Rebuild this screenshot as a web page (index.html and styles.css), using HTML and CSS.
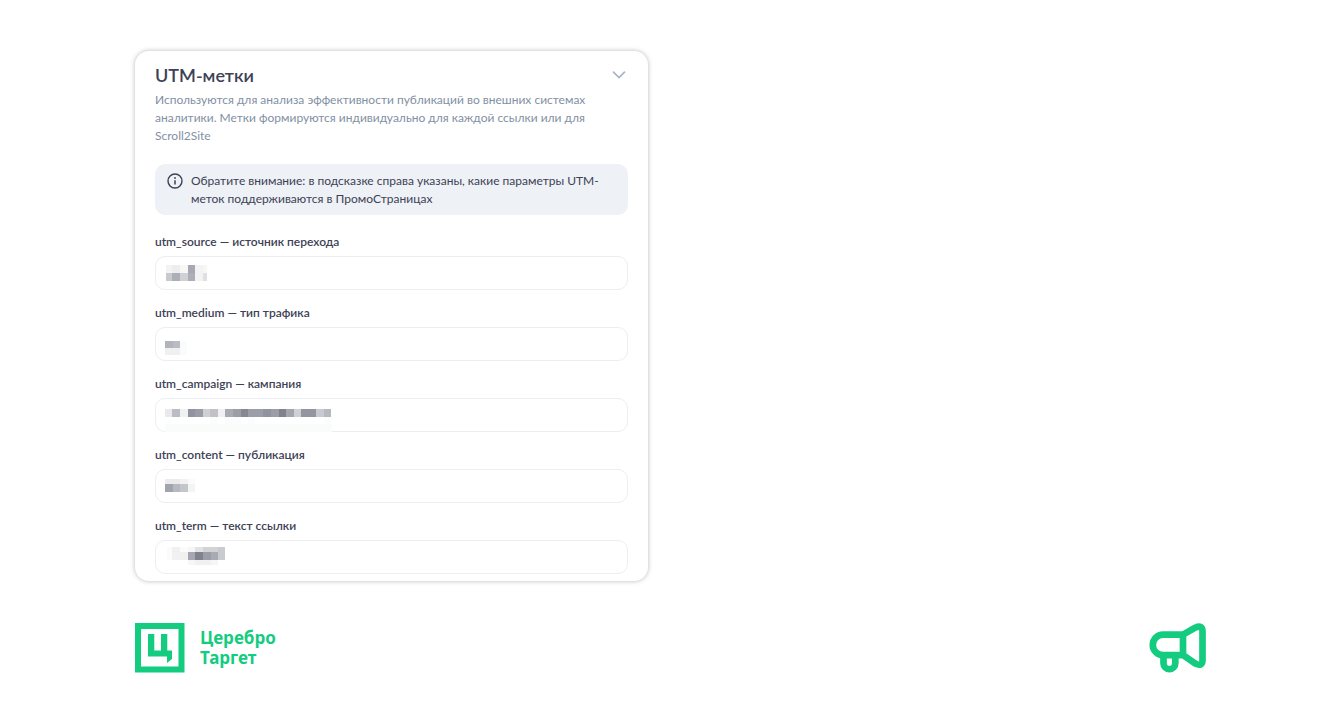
FILE: index.html
```html
<!DOCTYPE html>
<html lang="ru">
<head>
<meta charset="utf-8">
<meta name="viewport" content="width=device-width, initial-scale=1">
<title>UTM-метки</title>
<link rel="stylesheet" href="styles.css">
</head>
<body>
<main class="page">
  <form class="card">
    <header class="card-head">
      <h1 class="title">UTM-метки</h1>
      <button class="toggle" type="button" aria-label="Свернуть">
        <svg width="14" height="8" viewBox="0 0 14 8"><path d="M1.500 1.200 7 6.600l5.500-5.400" fill="none" stroke="currentColor" stroke-width="1.700" stroke-linecap="round"/></svg>
      </button>
    </header>
    <p class="lead">Используются для анализа эффективности публикаций во внешних системах аналитики. Метки формируются индивидуально для каждой ссылки или для Scroll2Site</p>
    <div class="notice">
      <svg class="notice-icon" width="16" height="16" viewBox="0 0 16 16"><circle cx="8" cy="8" r="7" fill="none" stroke="currentColor" stroke-width="1.4"/><circle cx="8" cy="5" r=".9" fill="currentColor"/><path d="M8 7.200v4.300" stroke="currentColor" stroke-width="1.5"/></svg>
      <p class="notice-text">Обратите внимание: в подсказке справа указаны, какие параметры UTM-меток поддерживаются в ПромоСтраницах</p>
    </div>

    <div class="field">
      <label class="label" for="source">utm_source — источник перехода</label>
      <div class="control">
        <input class="input" id="source" type="text">
        <svg class="mask" width="190" height="34" shape-rendering="crispEdges">
          <path fill="#f3f3f4" d="M11 9h6v8h-6zM40 9h8v16h-8z"/><path fill="#ededee" d="M17 9h8v8h-8z"/><path fill="#f7f7f8" d="M25 9h8v8h-8zM48 9h4v8h-4z"/>
          <path fill="#a6a9b2" d="M33 9h7v8h-7z"/><path fill="#c9cace" d="M11 17h6v8h-6z"/><path fill="#adafb6" d="M17 17h8v8h-8zM33 17h7v8h-7z"/><path fill="#d0d1d5" d="M25 17h8v8h-8z"/><path fill="#dfe0e2" d="M48 17h4v8h-4z"/>
        </svg>
      </div>
    </div>

    <div class="field">
      <label class="label" for="medium">utm_medium — тип трафика</label>
      <div class="control">
        <input class="input" id="medium" type="text">
        <svg class="mask" width="190" height="34" shape-rendering="crispEdges">
          <path fill="#b3b4bb" d="M10 14h8v7h-8z"/><path fill="#bbbcc2" d="M18 14h7v7h-7z"/><path fill="#f0f0f1" d="M10 21h15v7H10z"/><path fill="#fafcfc" d="M25 14h7v14h-7z"/>
        </svg>
      </div>
    </div>

    <div class="field">
      <label class="label" for="campaign">utm_campaign — кампания</label>
      <div class="control">
        <input class="input" id="campaign" type="text">
        <svg class="mask" width="190" height="34" shape-rendering="crispEdges">
          <path fill="#fafbfb" d="M10 26h167v8H10z"/><path fill="#fbfcfc" d="M55 18h8v8h-8zM70 18h16v8H70zM93 18h7v8h-7zM169 18h7v8h-7z"/>
          <path fill="#e9e9eb" d="M10 11h7v8h-7z"/><path fill="#bcbdc4" d="M17 11h8v8h-8z"/><path fill="#f1f1f3" d="M25 11h8v8h-8zM63 11h7v8h-7z"/>
          <path fill="#9093a0" d="M33 11h7v8h-7z"/><path fill="#9a9da7" d="M40 11h8v8h-8z"/><path fill="#cfd0d4" d="M48 11h7v8h-7z"/><path fill="#c0c2c8" d="M55 11h8v8h-8z"/>
          <path fill="#a9abb3" d="M70 11h8v8h-8z"/><path fill="#9b9da7" d="M78 11h8v8h-8z"/><path fill="#858893" d="M86 11h7v8h-7z"/><path fill="#9b9ea7" d="M93 11h15v8H93z"/>
          <path fill="#9093a0" d="M108 11h8v8h-8z"/><path fill="#9b9ea7" d="M116 11h8v8h-8z"/><path fill="#80838e" d="M124 11h7v8h-7z"/><path fill="#a4a6af" d="M131 11h8v8h-8z"/>
          <path fill="#cfd0d5" d="M139 11h7v8h-7z"/><path fill="#9396a0" d="M146 11h15v8h-15z"/><path fill="#c9cacf" d="M161 11h8v8h-8z"/><path fill="#b7b9c0" d="M169 11h7v8h-7z"/>
        </svg>
      </div>
    </div>

    <div class="field">
      <label class="label" for="content">utm_content — публикация</label>
      <div class="control">
        <input class="input" id="content" type="text">
        <svg class="mask" width="190" height="34" shape-rendering="crispEdges">
          <path fill="#ebebed" d="M10 10h15v5H10z"/><path fill="#f2f2f3" d="M25 10h8v5h-8z"/><path fill="#fbfbfb" d="M33 10h7v5h-7z"/>
          <path fill="#a1a3ad" d="M10 15h8v8h-8z"/><path fill="#b7b9c0" d="M18 15h7v8h-7z"/><path fill="#c5c6cb" d="M25 15h8v8h-8z"/><path fill="#f3f4f4" d="M33 15h7v8h-7z"/>
        </svg>
      </div>
    </div>

    <div class="field">
      <label class="label" for="term">utm_term — текст ссылки</label>
      <div class="control">
        <input class="input" id="term" type="text">
        <svg class="mask" width="190" height="34" shape-rendering="crispEdges">
          <path fill="#fbfbfb" d="M12 7h5v13h-5zM25 7h8v5h-8z"/><path fill="#f1f1f2" d="M17 7h8v13h-8zM25 12h8v8h-8zM40 20h16v5H40z"/><path fill="#f6f6f7" d="M33 7h7v5h-7zM33 20h7v5h-7zM56 20h7v5h-7z"/>
          <path fill="#e1e2e4" d="M40 7h8v5h-8z"/><path fill="#d2d3d7" d="M48 7h15v5H48z"/><path fill="#c9cbd0" d="M63 7h7v13h-7z"/>
          <path fill="#a6a8b1" d="M33 12h7v8h-7z"/><path fill="#80838e" d="M40 12h8v8h-8z"/><path fill="#9b9ea8" d="M48 12h8v8h-8z"/><path fill="#a9abb3" d="M56 12h7v8h-7z"/>
        </svg>
      </div>
    </div>
  </form>

  <footer class="footer">
    <div class="brand">
      <svg width="50" height="50" viewBox="0 0 50 50" fill="#14cc80"><path fill-rule="evenodd" d="M0 0h49.500v49.500H0zM6 6v37.500h37.500V6z"/><path d="M13 11h6.300v16.500H26V11h6.300v16.500H37V36l-5 4v-6.500H13z"/></svg>
      <p class="brand-name">Церебро<br>Таргет</p>
    </div>
    <svg width="58" height="50" viewBox="0 0 58 50" fill="none" stroke="#14cc80" stroke-width="6.700" stroke-linejoin="round"><path d="M35 11.700H15a10.200 10.200 0 0 0 0 20.400h20zM35 11.700l12.200-7Q54.500 1.500 54.500 8.500v28.500q0 7-7.300 3.500L35 32.100M15.500 33v7.200a5.900 5.900 0 0 0 11.800 0V33"/></svg>
  </footer>
</main>
</body>
</html>
```
FILE: styles.css
```css
* {
  box-sizing: border-box;
}

body {
  margin: 0;
  background: #fff;
  color: #3d4155;
  font: 12px/18px Lato, "Noto Sans", sans-serif;
}

h1,
p {
  margin: 0;
}

.page {
  padding: 51px 10% 40px;
}

.card {
  max-width: 513px;
  margin-left: 1px;
  padding: 12px 20px 7px;
  border-radius: 14px;
  background: #fff;
  box-shadow: 0 0 5px rgba(0, 0, 0, 0.28);
}

.card-head {
  display: flex;
  align-items: center;
  justify-content: space-between;
  margin-bottom: 4px;
}

.title {
  font-size: 18px;
  font-weight: 600;
  line-height: 24px;
}

.toggle {
  display: flex;
  padding: 2px;
  border: 0;
  background: none;
  color: #a9b4c9;
}

.lead {
  color: #8290a3;
}

.notice {
  display: flex;
  gap: 8px;
  margin: 19px 0 18px;
  padding: 8px 12px 7px;
  border-radius: 10px;
  background: #eef1f6;
}

.notice-icon {
  flex: none;
  margin-top: 1px;
}

.field + .field {
  margin-top: 14px;
}

.label {
  display: block;
  margin-bottom: 5px;
  font-weight: 600;
}

.control {
  display: grid;
}

.input,
.mask {
  grid-area: 1 / 1;
}

.input {
  width: 100%;
  height: 34px;
  padding: 0 10px;
  border: 1px solid #eceef4;
  border-radius: 10px;
  background: #fff;
  color: inherit;
  font: inherit;
}

.mask {
  pointer-events: none;
}

.footer {
  display: flex;
  align-items: center;
  justify-content: space-between;
  margin-top: 42px;
  padding-left: 1px;
}

.brand {
  display: flex;
  align-items: center;
  gap: 15px;
}

.brand-name {
  color: #14cc80;
  font-family: "Noto Sans", sans-serif;
  font-size: 17px;
  font-weight: 700;
  line-height: 20px;
}
```
